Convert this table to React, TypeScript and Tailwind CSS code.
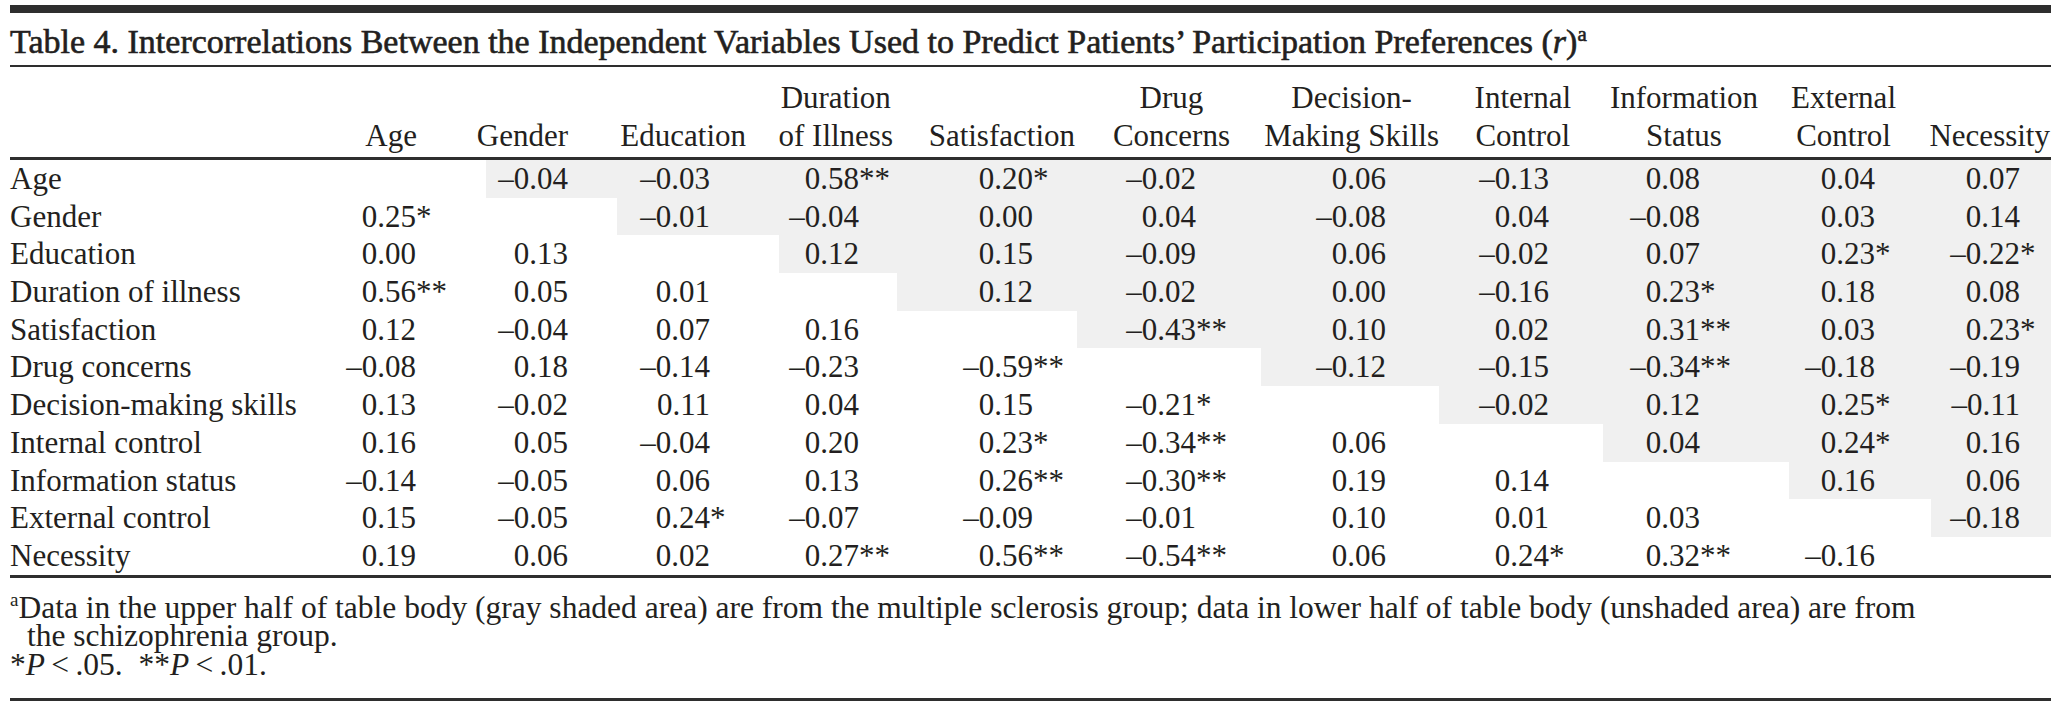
const cols = [
  { head: ["Age"], hp: "pr-[69px]", vp: "pr-[39px]" },
  { head: ["Gender"], hp: "pr-[49px]", vp: "pr-[18px]" },
  { head: ["Education"], hp: "pr-[33px]", vp: "pr-[38px]" },
  { head: ["Duration", "of Illness"], hp: "pr-[4px]", vp: "pr-[7px]" },
  { head: ["Satisfaction"], hp: "pr-[2px]", vp: "pr-[13px]" },
  { head: ["Drug", "Concerns"], hp: "pr-[31px]", vp: "pr-[34px]" },
  { head: ["Decision-", "Making Skills"], hp: "pr-0", vp: "pr-[22px]" },
  { head: ["Internal", "Control"], hp: "pr-[32px]", vp: "pr-[23px]" },
  { head: ["Information", "Status"], hp: "pr-[31px]", vp: "pr-[58px]" },
  { head: ["External", "Control"], hp: "pr-[35px]", vp: "pr-[25px]" },
  { head: ["Necessity"], hp: "pr-[1px]", vp: "pr-0" },
]

const rows: [string, string[]][] = [
  ["Age", ["", "–0.04", "–0.03", "0.58**", "0.20*", "–0.02", "0.06", "–0.13", "0.08", "0.04", "0.07"]],
  ["Gender", ["0.25*", "", "–0.01", "–0.04", "0.00", "0.04", "–0.08", "0.04", "–0.08", "0.03", "0.14"]],
  ["Education", ["0.00", "0.13", "", "0.12", "0.15", "–0.09", "0.06", "–0.02", "0.07", "0.23*", "–0.22*"]],
  ["Duration of illness", ["0.56**", "0.05", "0.01", "", "0.12", "–0.02", "0.00", "–0.16", "0.23*", "0.18", "0.08"]],
  ["Satisfaction", ["0.12", "–0.04", "0.07", "0.16", "", "–0.43**", "0.10", "0.02", "0.31**", "0.03", "0.23*"]],
  ["Drug concerns", ["–0.08", "0.18", "–0.14", "–0.23", "–0.59**", "", "–0.12", "–0.15", "–0.34**", "–0.18", "–0.19"]],
  ["Decision-making skills", ["0.13", "–0.02", "0.11", "0.04", "0.15", "–0.21*", "", "–0.02", "0.12", "0.25*", "–0.11"]],
  ["Internal control", ["0.16", "0.05", "–0.04", "0.20", "0.23*", "–0.34**", "0.06", "", "0.04", "0.24*", "0.16"]],
  ["Information status", ["–0.14", "–0.05", "0.06", "0.13", "0.26**", "–0.30**", "0.19", "0.14", "", "0.16", "0.06"]],
  ["External control", ["0.15", "–0.05", "0.24*", "–0.07", "–0.09", "–0.01", "0.10", "0.01", "0.03", "", "–0.18"]],
  ["Necessity", ["0.19", "0.06", "0.02", "0.27**", "0.56**", "–0.54**", "0.06", "0.24*", "0.32**", "–0.16", ""]],
]

const grid =
  "grid grid-cols-[330px_146px_131px_162px_118px_180px_184px_178px_164px_186px_142px_120px]"

// number right-aligned on its digits, stars hang into a fixed box
const Value = ({ v }: { v: string }) => {
  const stars = v.replace(/[^*]/g, "")
  const num = v.replace(/\*/g, "")
  return (
    <>
      <span>{num}</span>
      <span className="w-[31px] text-left">{stars}</span>
    </>
  )
}

export default function App() {
  return (
    <div className="w-[2060px] h-[706px] overflow-hidden bg-white text-[#231f20] font-['Liberation_Serif',serif]">
      <div className="pl-[10px] pr-[9px] pt-[5px]">
        <div className="h-[8px] bg-[#2e2e2e]" />

        <div className="h-[52px] pt-[6px] text-[34px] leading-[46px] whitespace-nowrap [-webkit-text-stroke:0.6px_#231f20]">
          Table 4. Intercorrelations Between the Independent Variables Used to Predict Patients’ Participation
          Preferences (<i>r</i>)<span className="align-super text-[21px] leading-none">a</span>
        </div>
        <div className="h-[2px] bg-[#2e2e2e]" />

        <div className={`${grid} h-[90px] pb-[2px] text-[31px] leading-[38px]`}>
          <div />
          {cols.map((c, i) => (
            <div key={i} className={`flex items-end justify-end ${c.hp}`}>
              <div className="text-center whitespace-nowrap">
                {c.head.map((l, k) => (
                  <div key={k}>{l}</div>
                ))}
              </div>
            </div>
          ))}
        </div>
        <div className="h-[3px] bg-[#2e2e2e]" />

        <div className="text-[31px] leading-[37.7px]">
          {rows.map(([label, vals], i) => (
            <div key={label} className={`${grid} h-[37.7px]`}>
              <div className="whitespace-nowrap">{label}</div>
              {vals.map((v, j) => (
                <div
                  key={j}
                  className={`flex justify-end whitespace-nowrap ${cols[j].vp} ${j > i ? "bg-[#f0f0f0]" : ""}`}
                >
                  {v && <Value v={v} />}
                </div>
              ))}
            </div>
          ))}
        </div>
        <div className="h-[3px] bg-[#2e2e2e]" />

        <div className="h-[120px] pt-[12px] text-[31.5px] leading-[29px]">
          <div className="pl-[17px] indent-[-17px] whitespace-nowrap">
            <span className="align-super text-[19px] leading-none">a</span>Data in the upper half of table body (gray
            shaded area) are from the multiple sclerosis group; data in lower half of table body (unshaded area) are
            from
          </div>
          <div className="pl-[17px] whitespace-nowrap">the schizophrenia group.</div>
          <div className="whitespace-nowrap">
            *<i>P</i>&thinsp;&lt;&thinsp;.05.&nbsp;&nbsp;**<i>P</i>&thinsp;&lt;&thinsp;.01.
          </div>
        </div>
        <div className="h-[3px] bg-[#2e2e2e]" />
      </div>
    </div>
  )
}
